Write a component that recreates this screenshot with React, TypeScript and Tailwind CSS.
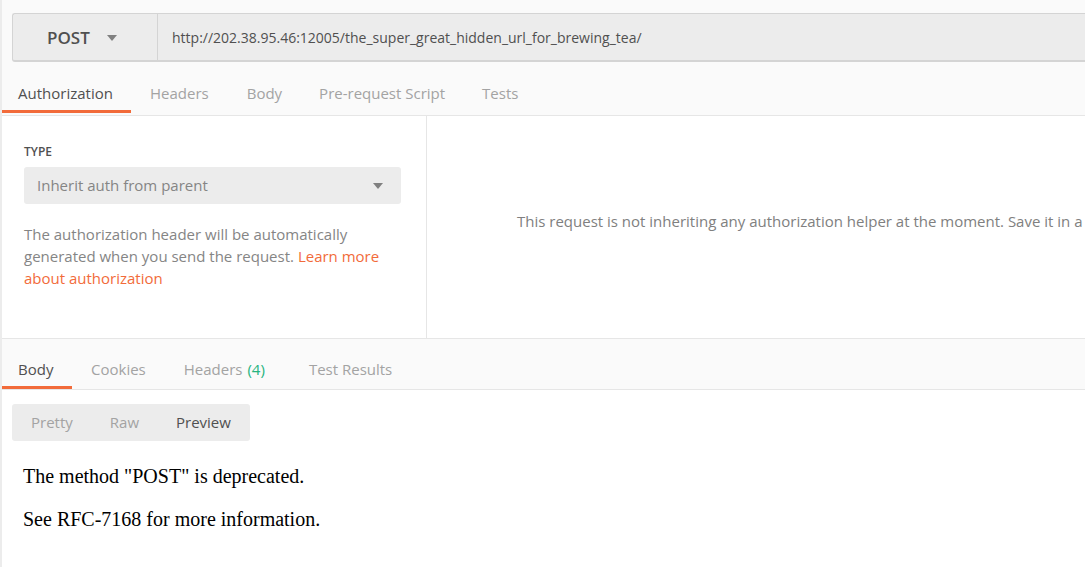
import React from "react";

const Caret = ({ className = "" }: { className?: string }) => (
  <svg width="10" height="6" viewBox="0 0 10 6" className={className}>
    <path d="M0 0 L10 0 L5 6 Z" fill="#808080" />
  </svg>
);

export default function App() {
  const font = { fontFamily: '"Open Sans", "Noto Sans", sans-serif' };
  return (
    <div
      className="w-[1085px] h-[567px] overflow-hidden bg-white border-l-2 border-[#ececec] flex flex-col"
      style={font}
    >
      {/* URL bar area */}
      <div className="bg-[#fafafa] pt-[13px] pl-[10px] pb-[8px]">
        <div className="flex h-[49px] bg-[#ececec] border-t border-b-2 border-l border-[#d4d4d4] rounded-l-[3px] w-[1200px]">
          <div className="w-[145px] flex items-center border-r border-[#d4d4d4] shrink-0 pt-[2px]">
            <span className="ml-[34px] text-[17px] font-semibold text-[#505050]">POST</span>
            <Caret className="ml-[17px]" />
          </div>
          <div className="flex items-center pl-[14px] text-[14px] text-[#505050]">
            http://202.38.95.46:12005/the_super_great_hidden_url_for_brewing_tea/
          </div>
        </div>
      </div>

      {/* Request tabs */}
      <div className="bg-[#fafafa] h-[46px] border-b border-[#e6e6e6] flex items-stretch text-[15px] text-[#a3a3a3] pt-[2px]">
        <div className="relative w-[129px] flex items-center pl-[16px] text-[#505050]">
          Authorization
          <div className="absolute left-[-2px] right-0 bottom-[2px] h-[3px] bg-[#f26b3a]" />
        </div>
        <div className="flex items-center ml-[19px]">Headers</div>
        <div className="flex items-center ml-[38px]">Body</div>
        <div className="flex items-center ml-[37px]">Pre-request Script</div>
        <div className="flex items-center ml-[37px]">Tests</div>
      </div>

      {/* Auth content */}
      <div className="h-[223px] flex bg-white border-b border-[#e6e6e6]">
        <div className="w-[425px] shrink-0 border-r border-[#e6e6e6] pl-[22px] pt-[27px]">
          <div className="text-[12px] font-semibold text-[#505050] leading-[16px] pt-[1px]">TYPE</div>
          <div className="mt-[7px] w-[377px] h-[37px] bg-[#ececec] rounded-[3px] flex items-center justify-between pl-[13px] pr-[18px]">
            <span className="text-[15px] text-[#858585]">Inherit auth from parent</span>
            <Caret />
          </div>
          <p className="mt-[19px] w-[370px] text-[15px] leading-[22px] text-[#858585]">
            The authorization header will be automatically generated when you send the request.{" "}
            <span className="text-[#f26b3a]">Learn more about authorization</span>
          </p>
        </div>
        <div className="flex-1 flex items-center pl-[90px] pb-[12px] overflow-hidden">
          <span className="whitespace-nowrap text-[15px] text-[#808080]">
            This request is not inheriting any authorization helper at the moment. Save it in a collection to use the parent's authorization helper.
          </span>
        </div>
      </div>

      {/* Response tabs */}
      <div className="bg-[#fafafa] h-[51px] border-b border-[#e6e6e6] flex items-stretch text-[15px] text-[#a3a3a3] pt-[10px]">
        <div className="relative w-[70px] flex items-center pl-[16px] text-[#505050]">
          Body
          <div className="absolute left-[-2px] right-0 bottom-0 h-[3px] bg-[#f26b3a]" />
        </div>
        <div className="flex items-center ml-[19px]">Cookies</div>
        <div className="flex items-center ml-[38px]">
          Headers<span className="ml-[5px] text-[#26b47f]">(4)</span>
        </div>
        <div className="flex items-center ml-[44px]">Test Results</div>
      </div>

      {/* Response body */}
      <div className="bg-white flex-1 pl-[10px] pt-[14px]">
        <div className="inline-flex items-center h-[37px] bg-[#ececec] rounded-[3px] text-[15px] text-[#a3a3a3] pl-[19px] pr-[19px]">
          <span>Pretty</span>
          <span className="ml-[37px]">Raw</span>
          <span className="ml-[37px] text-[#505050]">Preview</span>
        </div>
        <div
          className="pl-[11px] pt-[24px] text-[20px] text-black"
          style={{ fontFamily: '"Liberation Serif", "Times New Roman", serif' }}
        >
          <p className="leading-[23px]">The method "POST" is deprecated.</p>
          <p className="leading-[23px] mt-[20px]">See RFC-7168 for more information.</p>
        </div>
      </div>
    </div>
  );
}
